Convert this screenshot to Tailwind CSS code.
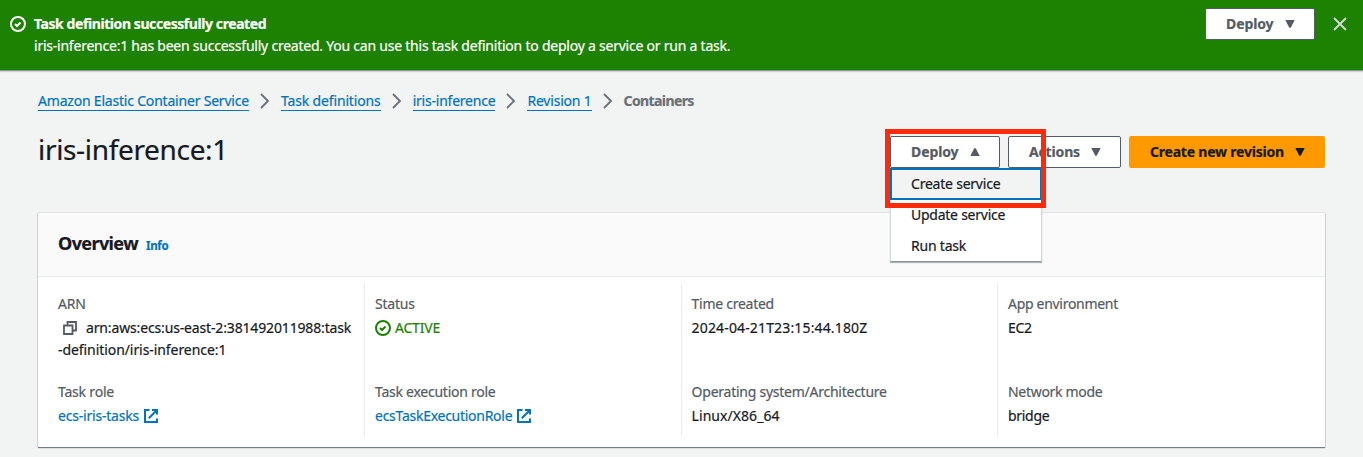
<!DOCTYPE html>
<html lang="en">
<head>
<meta charset="utf-8">
<title>iris-inference:1</title>
<script src="https://cdn.jsdelivr.net/npm/@tailwindcss/browser@4"></script>
</head>
<body class="h-[457px] overflow-hidden bg-[#f2f3f3] font-['Noto_Sans',sans-serif] text-[14px] leading-[22px] text-[#16191f] [-webkit-text-stroke:0.2px]">
<svg class="hidden">
  <symbol id="check" viewBox="0 0 16 16"><circle cx="8" cy="8" r="7" fill="none" stroke="currentColor" stroke-width="2"/><path d="M5 8l2 2 3.5-3.5" fill="none" stroke="currentColor" stroke-width="2"/></symbol>
  <symbol id="chev" viewBox="0 0 10 16"><path d="M1 1l7 7-7 7" fill="none" stroke="currentColor" stroke-width="1.8"/></symbol>
  <symbol id="ext" viewBox="0 0 14 14"><path d="M5.500 1H1v12h12V9.500M8 1h5v4.500M12.500 1.500L4.800 9.200" fill="none" stroke="currentColor" stroke-width="2"/></symbol>
  <symbol id="down" viewBox="0 0 10 8"><path d="M0.300 0h9.400L6 7.300Q5 8.500 4 7.300z" fill="currentColor"/></symbol>
</svg>
<header class="flex h-[71px] items-start border-b border-[#879596] bg-[#1d8102] pl-[10px] pr-[16px] text-white shadow-[0_1px_1px_rgba(0,28,36,0.15)]">
  <svg class="mt-4 h-4 w-4"><use href="#check"/></svg>
  <div class="ml-2 grow pt-[13px]">
    <p class="font-bold"><span class="tracking-[-0.42px]">Task definition successfully created</span></p>
    <p><span class="tracking-[-0.23px]">iris-inference:1 has been successfully created. You can use this task definition to deploy a service or run a task.</span></p>
  </div>
  <button class="mt-2 flex h-8 w-[110px] items-center rounded-[2px] border border-[#545b64] bg-white pl-[20px] font-bold text-[#545b64]"><span class="tracking-[-0.1px]">Deploy</span><svg class="ml-[11px] h-2 w-[10px]"><use href="#down"/></svg></button>
  <svg class="ml-[18px] mt-[17px] h-[14px] w-[14px]" viewBox="0 0 14 14"><path d="M1 1l12 12M13 1L1 13" stroke="#d5dbdb" stroke-width="1.8"/></svg>
</header>
<main class="px-[38px]">
  <nav class="flex h-[60px] items-center text-[#0073bb]">
    <a class="border-b border-current leading-[18px]"><span class="tracking-[-0.2px]">Amazon Elastic Container Service</span></a><svg class="mx-[11px] h-4 w-[10px] text-[#687078]"><use href="#chev"/></svg>
    <a class="border-b border-current leading-[18px]"><span class="tracking-[-0.15px]">Task definitions</span></a><svg class="mx-[11px] h-4 w-[10px] text-[#687078]"><use href="#chev"/></svg>
    <a class="border-b border-current leading-[18px]"><span class="tracking-[-0.22px]">iris-inference</span></a><svg class="mx-[11px] h-4 w-[10px] text-[#687078]"><use href="#chev"/></svg>
    <a class="border-b border-current leading-[18px]"><span class="tracking-[-0.2px]">Revision 1</span></a><svg class="mx-[11px] h-4 w-[10px] text-[#687078]"><use href="#chev"/></svg>
    <span class="font-bold tracking-[-0.6px] text-[#687078]">Containers</span>
  </nav>
  <div class="flex h-[82px] items-start">
    <h1 class="grow text-[28px] leading-[36px]"><span class="tracking-[-0.33px]">iris-inference:1</span></h1>
    <div class="mt-[5px] flex gap-2 font-bold text-[#545b64]">
      <div class="relative">
        <button class="flex h-8 w-[110px] items-center rounded-[2px] border border-[#545b64] bg-white pl-[20px]"><span class="tracking-[-0.1px]">Deploy</span><svg class="ml-[11px] h-2 w-[10px] rotate-180"><use href="#down"/></svg></button>
        <ul class="absolute left-0 top-8 z-10 h-[94px] w-[152px] border border-t-0 border-[#d5dbdb] border-b-[#879596] bg-white font-normal text-[#16191f] shadow-[0_1px_1px_rgba(0,28,36,0.3)]">
          <li class="-mx-px flex h-8 items-center border-2 border-[#0073bb] bg-[#f2f3f3] pl-[19px]"><span class="tracking-[-0.22px]">Create service</span></li>
          <li class="flex h-[30px] items-center pl-[20px]"><span class="tracking-[-0.25px]">Update service</span></li>
          <li class="flex h-[31px] items-center pl-[20px]"><span class="tracking-[-0.2px]">Run task</span></li>
        </ul>
        <div class="absolute -left-[5px] -top-[7px] z-20 h-[79px] w-[161px] border-[5px] border-[#ff2a0a]"></div>
      </div>
      <button class="flex h-8 w-[113px] items-center rounded-[2px] border border-[#545b64] bg-white pl-[20px]"><span class="tracking-[-0.15px]">Actions</span><svg class="ml-[11px] h-2 w-[10px]"><use href="#down"/></svg></button>
      <button class="flex h-8 w-[196px] items-center rounded-[2px] bg-[#ff9900] pl-[21px] text-[#16191f]"><span class="tracking-[-0.21px]">Create new revision</span><svg class="ml-[11px] h-2 w-[10px]"><use href="#down"/></svg></button>
    </div>
  </div>
  <section class="h-[234px] bg-white shadow-[0_1px_1px_0_rgba(0,28,36,0.5),0_0_1px_0_rgba(0,28,36,0.4)]">
    <div class="flex h-[64px] items-baseline border-b border-[#eaeded] bg-[#fafafa] pl-5 pt-[19px]">
      <h2 class="text-[18px] font-bold"><span class="tracking-[-0.6px]">Overview</span></h2><a class="ml-2 text-[11.5px] font-bold text-[#0073bb]"><span class="tracking-[-0.3px]">Info</span></a>
    </div>
    <div class="mt-[6px] grid h-[154px] grid-cols-[327px_317px_316px_1fr] text-[#16191f]">
      <div class="border-r border-[#eaeded] pl-5 pt-[10px]">
        <p class="text-[#545b64]"><span class="tracking-[-0.2px]">ARN</span></p>
        <p class="mt-[2px] flex items-center pl-[5px]"><svg class="mr-[9px] h-[14px] w-[14px] text-[#545b64]" viewBox="0 0 14 14" fill="none" stroke="currentColor" stroke-width="1.800"><path d="M1 4.500h8.500V13H1zM4.500 4.500V1H13v8.500H9.500"/></svg><span class="tracking-[-0.15px]">arn:aws:ecs:us-east-2:381492011988:task</span></p>
        <p><span class="tracking-[-0.07px]">-definition/iris-inference:1</span></p>
        <p class="mt-5 text-[#545b64]"><span class="tracking-[-0.2px]">Task role</span></p>
        <p class="mt-[2px] flex items-center text-[#0073bb]"><span class="tracking-[-0.2px]">ecs-iris-tasks</span><svg class="ml-[5px] h-[14px] w-[14px]"><use href="#ext"/></svg></p>
      </div>
      <div class="border-r border-[#eaeded] pl-[10px] pt-[10px]">
        <p class="text-[#545b64]"><span class="tracking-[-0.2px]">Status</span></p>
        <p class="mt-[2px] flex items-center text-[#1d8102]"><svg class="mr-1 h-4 w-4"><use href="#check"/></svg><span class="tracking-[-0.2px]">ACTIVE</span></p>
        <p class="mt-[42px] text-[#545b64]"><span class="tracking-[-0.25px]">Task execution role</span></p>
        <p class="mt-[2px] flex items-center text-[#0073bb]"><span class="tracking-[-0.27px]">ecsTaskExecutionRole</span><svg class="ml-[5px] h-[14px] w-[14px]"><use href="#ext"/></svg></p>
      </div>
      <div class="border-r border-[#eaeded] pl-[9.600px] pt-[10px]">
        <p class="text-[#545b64]"><span class="tracking-[-0.27px]">Time created</span></p>
        <p class="mt-[2px]"><span class="tracking-[0.15px]">2024-04-21T23:15:44.180Z</span></p>
        <p class="mt-[42px] text-[#545b64]"><span class="tracking-[-0.25px]">Operating system/Architecture</span></p>
        <p class="mt-[2px]"><span class="tracking-[0.05px]">Linux/X86_64</span></p>
      </div>
      <div class="pl-[10px] pt-[10px]">
        <p class="text-[#545b64]"><span class="tracking-[-0.3px]">App environment</span></p>
        <p class="mt-[2px]"><span class="tracking-[-0.3px]">EC2</span></p>
        <p class="mt-[42px] text-[#545b64]"><span class="tracking-[-0.3px]">Network mode</span></p>
        <p class="mt-[2px]"><span class="tracking-[-0.3px]">bridge</span></p>
      </div>
    </div>
  </section>
</main>
</body>
</html>
